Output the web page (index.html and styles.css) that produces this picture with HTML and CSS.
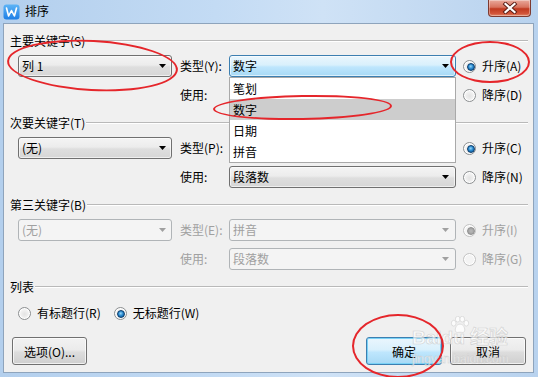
FILE: index.html
```html
<!DOCTYPE html>
<html lang="zh-CN">
<head>
<meta charset="utf-8">
<title>排序</title>
<link rel="stylesheet" href="styles.css">
</head>
<body>
<div class="window">
  <div class="titlebar">
    <svg class="app-icon" width="17" height="16" viewBox="0 0 17 16">
      <defs>
        <linearGradient id="ig" x1="0" y1="0" x2="0" y2="1">
          <stop offset="0" stop-color="#5db4f6"/>
          <stop offset="1" stop-color="#1e7fe6"/>
        </linearGradient>
      </defs>
      <rect x="0.5" y="0.5" width="16" height="15" rx="3" fill="url(#ig)"/>
      <polyline points="3.5,4 5.6,12 8.5,6.5 11.4,12 13.5,4" fill="none" stroke="#fff" stroke-width="1.6" stroke-linejoin="round" stroke-linecap="round"/>
    </svg>
    <span class="title">排序</span>
    <div class="close">
      <svg width="16" height="12" viewBox="0 0 16 12">
        <path d="M3.5 2 L12.5 10 M12.5 2 L3.5 10" stroke="#5a1e16" stroke-width="4" stroke-linecap="square"/>
        <path d="M3.5 2 L12.5 10 M12.5 2 L3.5 10" stroke="#fff" stroke-width="2.2" stroke-linecap="square"/>
      </svg>
    </div>
  </div>

  <div class="client">
    <section class="group">
      <div class="group-head"><span>主要关键字(S)</span></div>
      <div class="row">
        <div class="combo"><span class="val">列 1</span><i class="arrow"></i></div>
        <span class="lbl">类型(Y):</span>
        <div class="combo focus wide">
          <span class="val">数字</span><i class="arrow"></i>
          <ul class="dropdown">
            <li>笔划</li>
            <li class="hover">数字</li>
            <li>日期</li>
            <li>拼音</li>
          </ul>
        </div>
        <label class="radio on"><i class="dot"></i>升序(A)</label>
      </div>
      <div class="row">
        <span></span>
        <span class="lbl">使用:</span>
        <div class="combo wide"><span class="val"></span><i class="arrow"></i></div>
        <label class="radio"><i class="dot"></i>降序(D)</label>
      </div>
    </section>

    <section class="group">
      <div class="group-head"><span>次要关键字(T)</span></div>
      <div class="row">
        <div class="combo"><span class="val">(无)</span><i class="arrow"></i></div>
        <span class="lbl">类型(P):</span>
        <div class="combo wide"><span class="val"></span><i class="arrow"></i></div>
        <label class="radio on"><i class="dot"></i>升序(C)</label>
      </div>
      <div class="row">
        <span></span>
        <span class="lbl">使用:</span>
        <div class="combo wide"><span class="val">段落数</span><i class="arrow"></i></div>
        <label class="radio"><i class="dot"></i>降序(N)</label>
      </div>
    </section>

    <section class="group">
      <div class="group-head"><span>第三关键字(B)</span></div>
      <div class="row disabled">
        <div class="combo"><span class="val">(无)</span><i class="arrow"></i></div>
        <span class="lbl">类型(E):</span>
        <div class="combo wide"><span class="val">拼音</span><i class="arrow"></i></div>
        <label class="radio on"><i class="dot"></i>升序(I)</label>
      </div>
      <div class="row disabled">
        <span></span>
        <span class="lbl">使用:</span>
        <div class="combo wide"><span class="val">段落数</span><i class="arrow"></i></div>
        <label class="radio"><i class="dot"></i>降序(G)</label>
      </div>
    </section>

    <section class="group last">
      <div class="group-head"><span>列表</span></div>
      <div class="radio-row">
        <label class="radio"><i class="dot"></i>有标题行(R)</label>
        <label class="radio on"><i class="dot"></i>无标题行(W)</label>
      </div>
    </section>

    <div class="buttons">
      <button class="btn">选项(O)...</button>
      <div class="btn-pair">
        <button class="btn default">确定</button>
        <button class="btn">取消</button>
      </div>
    </div>
  </div>

  <div class="watermark">
    <svg class="paw" width="20" height="18" viewBox="0 0 22 20">
      <g fill="#fff" stroke="#cfcfcf" stroke-width="0.8">
        <ellipse cx="4" cy="8" rx="2.6" ry="3.2"/>
        <ellipse cx="8.5" cy="3.5" rx="2.6" ry="3.2"/>
        <ellipse cx="13.5" cy="3.5" rx="2.6" ry="3.2"/>
        <ellipse cx="18" cy="8" rx="2.6" ry="3.2"/>
        <path d="M11 9 C7 9 5 14 6 17 C7 19 9 18 11 18 C13 18 15 19 16 17 C17 14 15 9 11 9 Z"/>
      </g>
    </svg>
    <span class="wm-big">Baidu 经验</span>
    <span class="wm-small">jingyan.baidu.com</span>
  </div>

  <i class="mark m1"></i>
  <i class="mark m2"></i>
  <i class="mark m3"></i>
  <i class="mark m4"></i>
</div>
</body>
</html>
```

FILE: styles.css
```css
* { box-sizing: border-box; }
html, body { margin: 0; padding: 0; }
body {
  width: 538px;
  height: 377px;
  overflow: hidden;
  font-family: "Noto Sans CJK SC", "Microsoft YaHei", sans-serif;
  font-size: 12px;
  color: #000;
}

.window {
  position: relative;
  width: 538px;
  height: 377px;
  display: flex;
  flex-direction: column;
  background: linear-gradient(to right, #b3cfed 0%, #c3dbf4 40%, #cfe2f6 60%, #b8d2ee 100%);
}

.titlebar {
  height: 23px;
  display: flex;
  align-items: flex-start;
}
.app-icon { margin: 4px 0 0 3px; }
.title {
  margin: 3px 0 0 5px;
  line-height: 15px;
  font-size: 12px;
  color: #000;
}
.close {
  margin-left: auto;
  margin-right: 7px;
  width: 43px;
  height: 17px;
  border: 1px solid #7d3a30;
  border-top: none;
  border-radius: 0 0 4px 4px;
  background: linear-gradient(#e9a99b 0%, #d8725d 45%, #c0391f 55%, #d2553a 85%, #e08a6c 100%);
  box-shadow: inset 0 0 0 1px rgba(255,255,255,0.35);
  display: flex;
  align-items: center;
  justify-content: center;
}

.client {
  margin-left: 3px;
  width: 531px;
  height: 350px;
  border: 1px solid #8ea4bc;
  background: #f0f0f0;
  padding: 10px 5px 0 6px;
  display: flex;
  flex-direction: column;
}

.group { position: relative; margin-bottom: 10px; }
.group.last { margin-bottom: 0; }
.group-head {
  display: flex;
  height: 14px;
  line-height: 14px;
}
.group-head::after {
  content: "";
  flex: 1;
  height: 1px;
  margin: 6px 0 0 1px;
  background: #b9b9b9;
  box-shadow: 0 1px 0 #fff;
}

.row {
  display: grid;
  grid-template-columns: 154px 57px 227px auto;
  align-items: center;
  height: 22px;
  margin: 7px 0 0 8px;
}

.lbl { padding-left: 8px; line-height: 16px; }

.combo {
  position: relative;
  height: 22px;
  border: 1px solid #707070;
  border-radius: 3px;
  background: linear-gradient(#f4f4f4 0%, #ececec 45%, #dedede 55%, #d6d6d6 100%);
  box-shadow: inset 0 0 0 1px rgba(255,255,255,0.6);
  display: flex;
  align-items: center;
  padding: 0 5px 0 3px;
}
.combo .val { flex: 1; line-height: 16px; }
.combo.wide { padding-right: 6px; }
.combo.focus {
  border-color: #3c7fb1;
  background: linear-gradient(#eaf6fd 0%, #d9f0fc 45%, #bee6fd 55%, #a7d9f5 100%);
}
.arrow {
  width: 7px;
  height: 4px;
  background: #000;
  clip-path: polygon(0 0, 100% 0, 50% 100%);
}

.dropdown {
  position: absolute;
  z-index: 2;
  left: -1px;
  top: 21px;
  width: 227px;
  margin: 0;
  padding: 0;
  list-style: none;
  background: #fff;
  border: 1px solid #a9a9a9;
}
.dropdown li {
  height: 21px;
  line-height: 21px;
  padding-left: 3px;
}
.dropdown li.hover { background: #cdcdcd; }

.radio {
  display: flex;
  align-items: center;
  gap: 6px;
  line-height: 16px;
  white-space: nowrap;
}
.row .radio { margin-left: 7px; }
.dot {
  position: relative;
  width: 13px;
  height: 13px;
  border-radius: 50%;
  border: 1px solid #8c8f91;
  background: radial-gradient(circle at 50% 55%, #e3e3e3 0%, #f3f3f3 55%, #fafafa 100%);
  box-shadow: inset 0 0 0 1px #fff;
}
.radio.on .dot::after {
  content: "";
  position: absolute;
  left: 2.5px;
  top: 2.5px;
  width: 6px;
  height: 6px;
  border-radius: 50%;
  background: radial-gradient(circle at 45% 40%, #9ad8f7 0%, #2a8ad0 45%, #0e4f8a 100%);
  border: 0.5px solid #0b3c6b;
}

.row.disabled { color: #a0a0a0; }
.row.disabled .combo {
  border-color: #b0b4b7;
  background: #f4f4f4;
  box-shadow: none;
}
.row.disabled .arrow { background: #a0a0a0; }
.row.disabled .dot {
  border-color: #c2c2c2;
  background: #f4f4f4;
}
.row.disabled .radio.on .dot::after {
  background: radial-gradient(circle, #b8b8b8 0%, #9c9c9c 100%);
  border-color: #8e8e8e;
}

.radio-row {
  display: flex;
  gap: 13px;
  height: 16px;
  margin: 11px 0 0 8px;
}

.buttons {
  display: flex;
  justify-content: space-between;
  margin: 16px 2px 0 2px;
}
.btn-pair { display: flex; gap: 8px; }
.btn {
  width: 75px;
  height: 28px;
  padding: 0;
  font-family: inherit;
  font-size: 12px;
  color: #000;
  border: 1px solid #707070;
  border-radius: 3px;
  background: linear-gradient(#f2f2f2 0%, #ebebeb 45%, #dddddd 55%, #cfcfcf 100%);
  box-shadow: inset 0 0 0 1px rgba(255,255,255,0.7);
}
.btn-pair .btn { width: 76px; }
.btn.default {
  border-color: #3c7fb1;
  background: linear-gradient(#eaf6fd 0%, #d9f0fc 45%, #bee6fd 55%, #a7d9f5 100%);
  box-shadow: inset 0 0 0 1px #7ad2f6;
}

.watermark {
  position: absolute;
  z-index: 3;
  left: 410px;
  top: 315px;
  width: 104px;
  height: 52px;
  pointer-events: none;
  opacity: 0.85;
}
.paw { position: absolute; left: 40px; top: 1px; }
.wm-big {
  position: absolute;
  left: 2px;
  top: 12px;
  white-space: nowrap;
  font-family: "Liberation Sans", "Noto Sans CJK SC", sans-serif;
  font-size: 19px;
  font-weight: bold;
  line-height: 22px;
  color: rgba(255,255,255,0.8);
  -webkit-text-stroke: 0.6px #cdcdcd;
}
.wm-small {
  position: absolute;
  left: 2px;
  top: 37px;
  white-space: nowrap;
  font-family: "Liberation Sans", sans-serif;
  font-size: 12px;
  line-height: 14px;
  color: rgba(255,255,255,0.85);
  -webkit-text-stroke: 0.4px #cacaca;
}

.mark {
  position: absolute;
  z-index: 5;
  border: 2.5px solid #e5262b;
  border-radius: 50%;
  pointer-events: none;
}
.m1 { left: 7px; top: 40px; width: 171px; height: 51px; transform: rotate(3deg); }
.m2 { left: 450px; top: 41px; width: 80px; height: 42px; }
.m3 { left: 213px; top: 95px; width: 179px; height: 25px; transform: rotate(-1deg); }
.m4 { left: 352px; top: 314px; width: 92px; height: 64px; }
```
